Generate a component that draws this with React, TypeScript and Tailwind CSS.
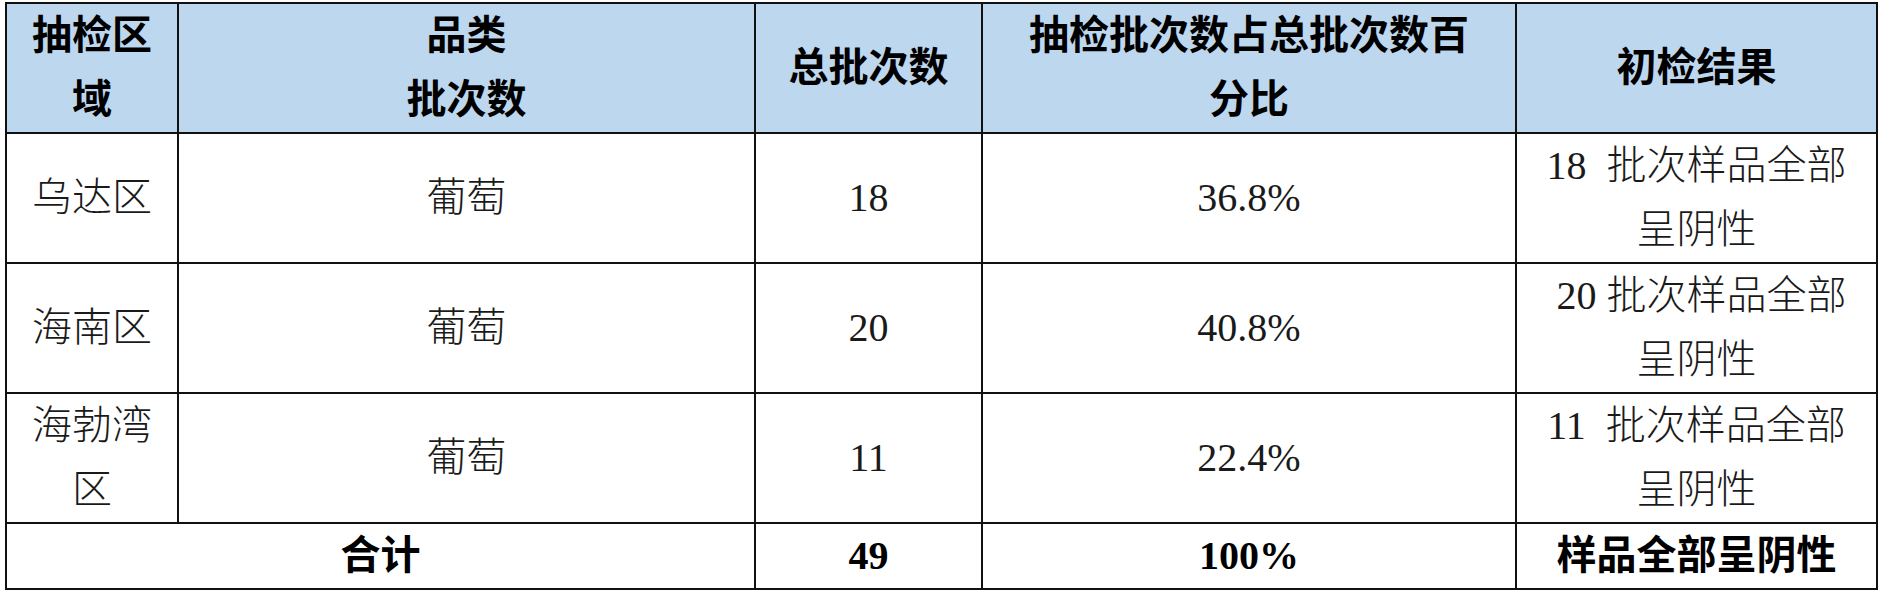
const rows = [
  { area: ['乌达区'], kind: '葡萄', total: '18', pct: '36.8%', result: '18\u00a0\u00a0批次样品全部' },
  { area: ['海南区'], kind: '葡萄', total: '20', pct: '40.8%', result: '\u00a020\u00a0批次样品全部' },
  { area: ['海勃湾', '区'], kind: '葡萄', total: '11', pct: '22.4%', result: '11\u00a0\u00a0批次样品全部' },
];

const cell = 'border-2 border-[#111] text-center align-middle p-0';
const head = `${cell} bg-[#bdd7ee] font-bold text-black`;
const body = `${cell} text-[#1a1a1a]`;

function Lines({ items }: { items: string[] }) {
  return (
    <>
      {items.map((t, i) => (
        <div key={i}>{t}</div>
      ))}
    </>
  );
}

export default function App() {
  return (
    <div className="min-h-[600px] bg-white pl-[5px] pt-[2px]">
      <table
        className="table-fixed border-collapse text-[40px] leading-[64px]"
        style={{ fontFamily: '"Liberation Serif", "Noto Sans CJK SC", serif' }}
      >
        <colgroup>
          <col className="w-[172px]" />
          <col className="w-[577px]" />
          <col className="w-[227px]" />
          <col className="w-[534px]" />
          <col className="w-[361px]" />
        </colgroup>
        <thead>
          <tr>
            <th className={`${head} h-[130px]`}>
              <Lines items={['抽检区', '域']} />
            </th>
            <th className={head}>
              <Lines items={['品类', '批次数']} />
            </th>
            <th className={head}>总批次数</th>
            <th className={head}>
              <Lines items={['抽检批次数占总批次数百', '分比']} />
            </th>
            <th className={head}>初检结果</th>
          </tr>
        </thead>
        <tbody className="font-light">
          {rows.map((r) => (
            <tr key={r.total}>
              <td className={`${body} h-[128px]`}>
                <Lines items={r.area} />
              </td>
              <td className={body}>{r.kind}</td>
              <td className={body}>{r.total}</td>
              <td className={body}>{r.pct}</td>
              <td className={body}>
                <Lines items={[r.result, '呈阴性']} />
              </td>
            </tr>
          ))}
          <tr className="font-bold text-black">
            <td colSpan={2} className={`${cell} h-[65px]`}>合计</td>
            <td className={cell}>49</td>
            <td className={cell}>100%</td>
            <td className={cell}>样品全部呈阴性</td>
          </tr>
        </tbody>
      </table>
    </div>
  );
}
